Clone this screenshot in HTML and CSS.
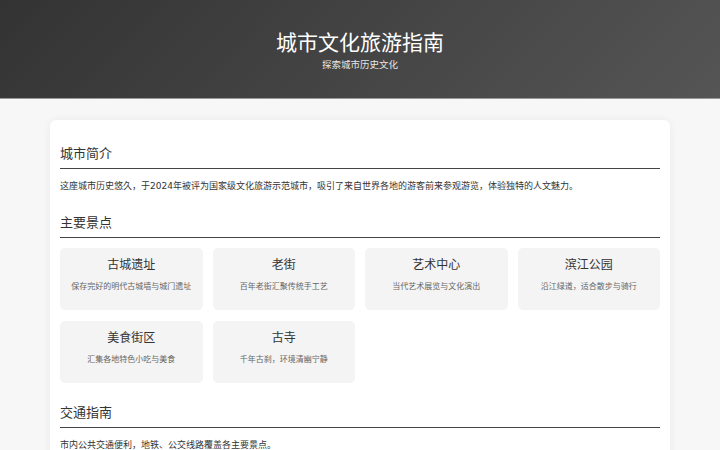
FILE: index.html
```html
<!DOCTYPE html>
<html lang="zh">
<head>
    <meta charset="UTF-8">
    <meta name="viewport" content="width=device-width, initial-scale=1.0">
    <title>城市文化旅游指南</title>
    <link rel="stylesheet" href="styles.css">
</head>
<body>
    <header class="site-header">
        <h1>城市文化旅游指南</h1>
        <p class="subtitle">探索城市历史文化</p>
    </header>

    <main class="container">
        <section class="section">
            <h2>城市简介</h2>
            <p>这座城市历史悠久，于2024年被评为国家级文化旅游示范城市，吸引了来自世界各地的游客前来参观游览，体验独特的人文魅力。</p>
        </section>

        <section class="section">
            <h2>主要景点</h2>
            <div class="card-grid">
                <div class="card">
                    <h3>古城遗址</h3>
                    <p>保存完好的明代古城墙与城门遗址</p>
                </div>
                <div class="card">
                    <h3>老街</h3>
                    <p>百年老街汇聚传统手工艺</p>
                </div>
                <div class="card">
                    <h3>艺术中心</h3>
                    <p>当代艺术展览与文化演出</p>
                </div>
                <div class="card">
                    <h3>滨江公园</h3>
                    <p>沿江绿道，适合散步与骑行</p>
                </div>
                <div class="card">
                    <h3>美食街区</h3>
                    <p>汇集各地特色小吃与美食</p>
                </div>
                <div class="card">
                    <h3>古寺</h3>
                    <p>千年古刹，环境清幽宁静</p>
                </div>
            </div>
        </section>

        <section class="section">
            <h2>交通指南</h2>
            <p>市内公共交通便利，地铁、公交线路覆盖各主要景点。</p>
        </section>
    </main>
</body>
</html>
```

FILE: styles.css
```css
body {
    margin: 0;
    padding: 0;
    background: #f7f7f7;
    color: #333;
    font-family: "DejaVu Sans", "Noto Sans CJK SC", sans-serif;
}
.site-header {
    height: 99px;
    box-sizing: border-box;
    padding-top: 31px;
    background: linear-gradient(135deg, #333 0%, #555 100%);
    color: #fff;
    text-align: center;
    border-bottom: 1px solid #999;
}
.site-header h1 {
    margin: 0;
    font-size: 21px;
    line-height: 24px;
    font-weight: normal;
}
.subtitle {
    margin: 4px 0 0;
    font-size: 9.5px;
    line-height: 12px;
    color: #e6e6e6;
}
.container {
    max-width: 600px;
    margin: 21px auto 0;
    padding: 26px 10px 20px;
    background: #fff;
    border-radius: 6px;
    box-shadow: 0 0 8px rgba(0, 0, 0, 0.06);
}
.section + .section {
    margin-top: 22px;
}
.section h2 {
    margin: 0 0 10px;
    padding-bottom: 6px;
    font-size: 13px;
    line-height: 16px;
    font-weight: normal;
    color: #333;
    border-bottom: 1px solid #444;
}
.section p {
    margin: 0;
    font-size: 9px;
    line-height: 14px;
}
.card-grid {
    display: grid;
    grid-template-columns: repeat(4, 1fr);
    gap: 11px 10px;
}
.card {
    height: 62px;
    box-sizing: border-box;
    padding: 10px 8px;
    background: #f4f4f4;
    border-radius: 5px;
    text-align: center;
}
.card h3 {
    margin: 0;
    font-size: 12px;
    line-height: 14px;
    font-weight: normal;
    color: #333;
}
.section .card p {
    margin-top: 9px;
    font-size: 8px;
    line-height: 12px;
    color: #666;
}
```
